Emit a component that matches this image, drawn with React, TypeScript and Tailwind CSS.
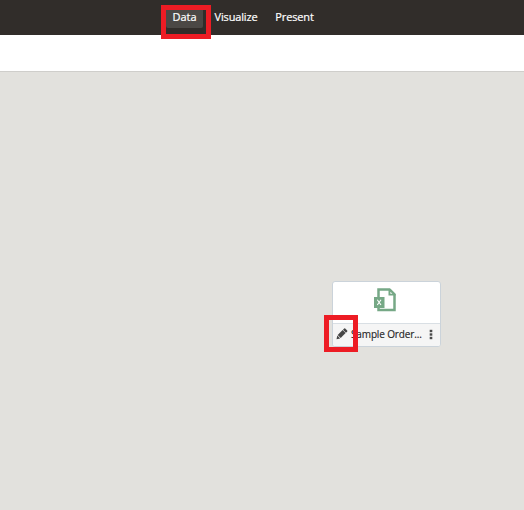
const tabs = [
  { label: 'Data', className: 'w-[37px] bg-[#4b4845]' },
  { label: 'Visualize', className: 'ml-[11px] w-[44px] tracking-[-0.17px]' },
  { label: 'Present', className: 'ml-[17px] w-[39px] tracking-[-0.14px]' },
];

function SpreadsheetIcon() {
  return (
    <svg width="24" height="25" viewBox="0 0 24 25" fill="none">
      <path d="M4.5 9V1.5H15.5L20.5 6.5V22H4.5V19" stroke="#76a886" strokeWidth="2.5" />
      <path d="M14.5 1V7.5H21.5V6L16.5 1Z" fill="#76a886" />
      <path d="M16.4 3.8V5.8H18.4Z" fill="#fff" />
      <rect x="0" y="9" width="10.5" height="11" fill="#76a886" />
      <path d="M3.3 11.7L7 17M7 11.7L3.3 17" stroke="#fff" strokeWidth="1.1" />
    </svg>
  );
}

function PencilIcon() {
  return (
    <svg width="12" height="12" viewBox="0 0 12 12" fill="#454545">
      <path d="M0.5 11.2L1.3 7.5L4.2 10.4Z" />
      <path d="M1.7 7L6.6 2.1L9.6 5.1L4.7 10Z" />
      <path d="M7 1.7L8.2 0.5Q8.7 0.1 9.2 0.5L11.2 2.5Q11.6 3 11.2 3.5L10 4.7Z" />
    </svg>
  );
}

function DatasetCard() {
  return (
    <div className="absolute left-[332px] top-[209px] flex h-[66px] w-[109px] flex-col overflow-hidden rounded-[3px] border border-[#cbd3da] bg-white">
      <div className="flex h-[41px] shrink-0 justify-center pt-[6px] pr-px">
        <SpreadsheetIcon />
      </div>
      <div className="flex flex-1 items-center border-t border-[#d9dfe4] bg-[#f5f5f5] pb-[2px] pl-[3px] text-[#262626]">
        <PencilIcon />
        <span className="ml-[3px] w-[71px] whitespace-nowrap text-[10px] font-medium leading-none tracking-[-0.14px] [-webkit-text-stroke:0.15px_currentColor]">
          Sample Order...
        </span>
        <svg className="ml-[7px]" width="4" height="11" viewBox="0 0 4 11" fill="#4b4b4b">
          <rect x="0.7" y="0.8" width="2.6" height="2.4" />
          <rect x="0.7" y="4.3" width="2.6" height="2.4" />
          <rect x="0.7" y="7.8" width="2.6" height="2.4" />
        </svg>
      </div>
    </div>
  );
}

export default function App() {
  return (
    <div className="relative flex h-[510px] w-[524px] flex-col overflow-hidden bg-[#e2e1dd] font-['Open_Sans','Noto_Sans',sans-serif]">
      <header className="flex h-[35px] shrink-0 bg-[#312d2a] pl-[166px] pt-[6px]">
        {tabs.map((tab) => (
          <button
            key={tab.label}
            className={`flex h-[22px] items-center justify-center whitespace-nowrap rounded-[2px] pb-[2px] text-[11px] font-medium leading-none text-white [-webkit-text-stroke:0.2px_currentColor] ${tab.className}`}
          >
            {tab.label}
          </button>
        ))}
      </header>
      <div className="h-[37px] shrink-0 border-b border-[#cfcecb] bg-white" />
      <main className="relative flex-1">
        <DatasetCard />
      </main>
      <div className="absolute left-[161px] top-[5px] h-[34px] w-[50px] border-[5px] border-[#ed1c24]" />
      <div className="absolute left-[324px] top-[315px] h-[37px] w-[34px] border-[5px] border-[#ed1c24]" />
    </div>
  );
}
